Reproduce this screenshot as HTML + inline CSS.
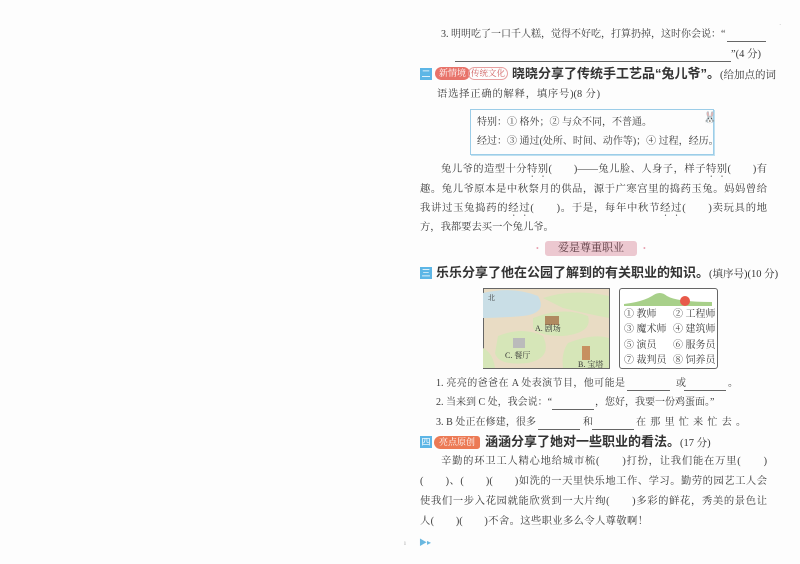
<!DOCTYPE html>
<html><head><meta charset="utf-8"><style>
*{margin:0;padding:0;box-sizing:border-box}
body{width:800px;height:564px;background:#fdfdfd;position:relative;overflow:hidden;font-family:"Liberation Serif","Noto Serif CJK SC",serif;color:#3a3a3a;font-size:10px}
.a{position:absolute;white-space:nowrap;line-height:14px}
.j{position:absolute;white-space:nowrap;line-height:14px;text-align:justify;text-align-last:justify;text-justify:inter-character}
.p{font-size:10.3px}
.b{font-family:"Liberation Sans","Noto Sans CJK SC",sans-serif;font-weight:bold;font-size:13px;color:#333}
.n{font-weight:normal;font-family:"Liberation Serif","Noto Serif CJK SC",serif;font-size:10.5px}
.ic{position:absolute;width:12px;height:12px;background:#5db6e6;color:#fff;font-size:9px;line-height:12px;text-align:center;font-family:"Noto Sans CJK SC",sans-serif}
.u{position:absolute;height:1px;background:#666}
.dot{text-emphasis:dot;text-emphasis-position:under;-webkit-text-emphasis:dot;-webkit-text-emphasis-position:under}
</style></head><body>

<div class="j" style="left:441px;top:28px;width:284px">3. 明明吃了一口千人糕，觉得不好吃，打算扔掉，这时你会说：“</div>
<div class="u" style="left:727px;top:41px;width:39px"></div>
<div class="u" style="left:455px;top:61px;width:276px"></div>
<div class="a" style="left:731px;top:48px;font-size:10.5px">”(4 分)</div>

<div class="ic" style="left:420px;top:68px">二</div>
<div class="a" style="left:435px;top:67px;width:35px;height:13px;background:#e8736a;border-radius:7px;color:#fff;font-size:9px;line-height:13px;text-align:center">新情境</div>
<div class="a" style="left:468px;top:67px;width:40px;height:13px;border:1px solid #e8a0a0;border-radius:7px;color:#d06060;font-size:8.5px;line-height:11px;text-align:center">传统文化</div>
<div class="j b" style="left:512px;top:67px;width:255px">晓晓分享了传统手工艺品“兔儿爷”。<span class="n">(给加点的词</span></div>
<div class="j p" style="left:437px;top:88px;width:163px">语选择正确的解释，填序号)(8 分)</div>

<div style="position:absolute;left:470px;top:109px;width:244px;height:46px;border:1.5px solid #9ccde8;box-shadow:1px 1px 0 #bfe0f0"></div>
<div class="j" style="left:477px;top:116px;width:163px">特别：① 格外；② 与众不同，不普通。</div>
<div class="j" style="left:477px;top:135px;width:230px">经过：③ 通过(处所、时间、动作等)；④ 过程，经历。</div>
<div class="a" style="left:703px;top:111px;font-size:11px;color:#999">🐰</div>

<div class="j p" style="left:441px;top:163px;width:326px">兔儿爷的造型十分<span class="dot">特别</span>(　　)——兔儿脸、人身子，样子<span class="dot">特别</span>(　　)有</div>
<div class="j p" style="left:420px;top:183px;width:347px">趣。兔儿爷原本是中秋祭月的供品，源于广寒宫里的捣药玉兔。妈妈曾给</div>
<div class="j p" style="left:420px;top:202px;width:347px">我讲过玉兔捣药的<span class="dot">经过</span>(　　)。于是，每年中秋节<span class="dot">经过</span>(　　)卖玩具的地</div>
<div class="j p" style="left:420px;top:221px;width:127px">方，我都要去买一个兔儿爷。</div>

<div class="a" style="left:545px;top:241px;width:92px;height:15px;background:#ecc8d0;border-radius:3px;text-align:center;font-size:11px;line-height:15px;color:#5a3a40">爱是尊重职业</div>
<div class="a" style="left:536px;top:242px;color:#e8a0b0;font-size:8px">•</div>
<div class="a" style="left:643px;top:242px;color:#e8a0b0;font-size:8px">•</div>

<div class="ic" style="left:420px;top:267px">三</div>
<div class="j b" style="left:436px;top:266px;width:312px">乐乐分享了他在公园了解到的有关职业的知识。<span class="n">(填序号)(10 分)</span></div>

<svg style="position:absolute;left:483px;top:288px" width="127" height="81" viewBox="0 0 127 81">
<rect x="0.5" y="0.5" width="126" height="80" fill="#e9dcc4" stroke="#666"/>
<path d="M0 5 Q30 -2 55 8 Q65 25 40 28 Q15 30 0 30Z" fill="#c9dee6"/>
<path d="M60 10 Q90 0 126 8 L126 30 Q100 25 80 20Z" fill="#d6e6b8"/>
<path d="M50 30 Q80 18 105 28 Q110 45 80 48 Q55 48 50 40Z" fill="#d6e6b8"/>
<path d="M15 48 Q40 38 60 48 Q70 70 45 75 Q15 78 12 65Z" fill="#d6e6b8"/>
<path d="M85 55 Q110 45 126 50 L126 80 L80 80 Q78 65 85 55Z" fill="#d6e6b8"/>
<path d="M0 60 Q10 65 12 80 L0 80Z" fill="#d6e6b8"/>
<rect x="62" y="28" width="14" height="9" fill="#b08a60"/>
<rect x="30" y="50" width="12" height="10" fill="#bbb"/>
<rect x="99" y="58" width="8" height="14" fill="#c79060"/>
<text x="5" y="12" font-size="7" fill="#333">北</text>
<text x="52" y="43" font-size="8" fill="#333">A. 剧场</text>
<text x="22" y="70" font-size="8" fill="#333">C. 餐厅</text>
<text x="95" y="79" font-size="8" fill="#333">B. 宝塔</text>
</svg>
<div style="position:absolute;left:619px;top:288px;width:99px;height:81px;border:1.2px solid #666;border-radius:3px;background:#fff"></div>
<svg style="position:absolute;left:622px;top:290px" width="92" height="16"><path d="M2 14 Q20 12 30 6 Q38 0 45 6 Q55 12 90 12 L90 16 L2 16Z" fill="#a8d08a"/><circle cx="63" cy="11" r="5" fill="#e85a4a"/></svg>
<div class="a" style="left:624px;top:307px;font-size:10px;line-height:15.3px">① 教师<br>③ 魔术师<br>⑤ 演员<br>⑦ 裁判员</div>
<div class="a" style="left:673px;top:307px;font-size:10px;line-height:15.3px">② 工程师<br>④ 建筑师<br>⑥ 服务员<br>⑧ 饲养员</div>

<div class="j" style="left:436px;top:377px;width:189px">1. 亮亮的爸爸在 A 处表演节目，他可能是</div>
<div class="u" style="left:627px;top:390px;width:43px"></div>
<div class="a" style="left:676px;top:377px">或</div>
<div class="u" style="left:684px;top:390px;width:42px"></div>
<div class="a" style="left:728px;top:377px">。</div>
<div class="j" style="left:436px;top:396px;width:112px">2. 当来到 C 处，我会说：“</div>
<div class="u" style="left:552px;top:409px;width:42px"></div>
<div class="j" style="left:595px;top:396px;width:118px">，您好，我要一份鸡蛋面。”</div>
<div class="j" style="left:436px;top:416px;width:100px">3. B 处正在修建，很多</div>
<div class="u" style="left:538px;top:429px;width:42px"></div>
<div class="a" style="left:583px;top:416px">和</div>
<div class="u" style="left:592px;top:429px;width:42px"></div>
<div class="j" style="left:636px;top:416px;width:110px">在那里忙来忙去。</div>

<div class="ic" style="left:420px;top:436px">四</div>
<div class="a" style="left:434px;top:436px;width:46px;height:13px;background:#ec7a55;border-radius:7px 3px 3px 7px;color:#fff;font-size:9px;line-height:13px;text-align:center">亮点原创</div>
<div class="j b" style="left:485px;top:435px;width:210px">涵涵分享了她对一些职业的看法。<span class="n">(17 分)</span></div>

<div class="j p" style="left:441px;top:455px;width:326px">辛勤的环卫工人精心地给城市梳(　　)打扮，让我们能在万里(　　)</div>
<div class="j p" style="left:420px;top:475px;width:347px">(　　)、(　　)(　　)如洗的一天里快乐地工作、学习。勤劳的园艺工人会</div>
<div class="j p" style="left:420px;top:495px;width:347px">使我们一步入花园就能欣赏到一大片绚(　　)多彩的鲜花，秀美的景色让</div>
<div class="j p" style="left:420px;top:515px;width:228px">人(　　)(　　)不舍。这些职业多么令人尊敬啊！</div>

<div class="a" style="left:404px;top:536px;font-size:7px;color:#aaa">ı</div>
<div class="a" style="left:419px;top:536px;font-size:8px;color:#6bb8e0">▶▸</div>
<div class="a" style="left:779px;top:18px;font-size:7px;color:#bbb">·</div>
</body></html>
